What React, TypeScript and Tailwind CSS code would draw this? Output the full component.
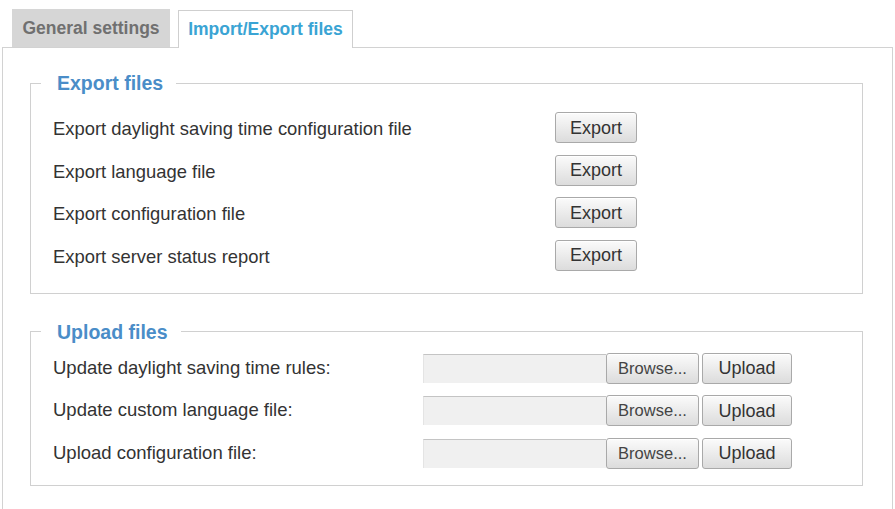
import React from "react";

const font = "font-['Liberation_Sans',Arial,sans-serif]";

function Btn({ children, w, cls = "" }: { children: React.ReactNode; w: string; cls?: string }) {
  return (
    <button
      type="button"
      className={`${w} h-[31px] rounded-[3px] border border-[#a9a9a9] bg-gradient-to-b from-[#fbfbfb] to-[#dcdcdc] text-[#333] leading-none flex items-center justify-center shadow-[inset_0_1px_0_#fff] ${cls}`}
    >
      {children}
    </button>
  );
}

const exportsList = [
  "Export daylight saving time configuration file",
  "Export language file",
  "Export configuration file",
  "Export server status report",
];

const uploads = [
  "Update daylight saving time rules:",
  "Update custom language file:",
  "Upload configuration file:",
];

export default function App() {
  return (
    <div className={`w-[895px] h-[509px] overflow-hidden bg-white ${font} text-[#333]`}>
      <div className="flex items-end pl-[12px] pt-[9px] gap-[8px]">
        <div className="w-[158px] h-[38px] bg-[#d6d6d6] flex items-center justify-center text-[17.5px] font-bold text-[#707070]">
          General settings
        </div>
        <div className="relative z-10 -mb-px w-[175px] h-[38px] bg-white border border-b-0 border-[#cfcfcf] flex items-center justify-center text-[17.5px] font-bold text-[#3aa4d4]">
          Import/Export files
        </div>
      </div>
      <div className="ml-[2px] mr-[2px] h-[500px] border border-[#d2d2d2] pl-[27px] pr-[29px] pt-[24px]">
        <fieldset className="border border-[#d0d0d0] pb-[22px]">
          <legend className="ml-[10px] pl-[16px] pr-[13px] text-[19.5px] leading-[22px] font-bold text-[#4a8dc8]">
            Export files
          </legend>
          <div className="flex flex-col gap-[11.5px] pt-[18px] pl-[22px]">
            {exportsList.map((t) => (
              <div key={t} className="grid grid-cols-[502px_auto] items-center h-[31px]">
                <span className="text-[18.4px] leading-none translate-y-[2px]">{t}</span>
                <Btn w="w-[82px]" cls="text-[18px]">Export</Btn>
              </div>
            ))}
          </div>
        </fieldset>
        <fieldset className="mt-[27px] border border-[#d0d0d0] pb-[16px]">
          <legend className="ml-[10px] pl-[16px] pr-[13px] text-[19.5px] leading-[22px] font-bold text-[#4a8dc8]">
            Upload files
          </legend>
          <div className="flex flex-col gap-[11.5px] pt-[10px] pl-[22px]">
            {uploads.map((t) => (
              <div key={t} className="grid grid-cols-[370px_auto] items-center h-[31px]">
                <span className="text-[18.5px] leading-none">{t}</span>
                <div className="flex items-center">
                  <div className="w-[183px] h-[29px] bg-[#f0f0f0] border-t border-t-[#c4c4c4] border-l border-l-[#e4e4e4]" />
                  <Btn w="w-[93px]" cls="text-[16.5px] text-[#444]">Browse...</Btn>
                  <Btn w="w-[90px]" cls="ml-[3px] text-[18px]">Upload</Btn>
                </div>
              </div>
            ))}
          </div>
        </fieldset>
      </div>
    </div>
  );
}
